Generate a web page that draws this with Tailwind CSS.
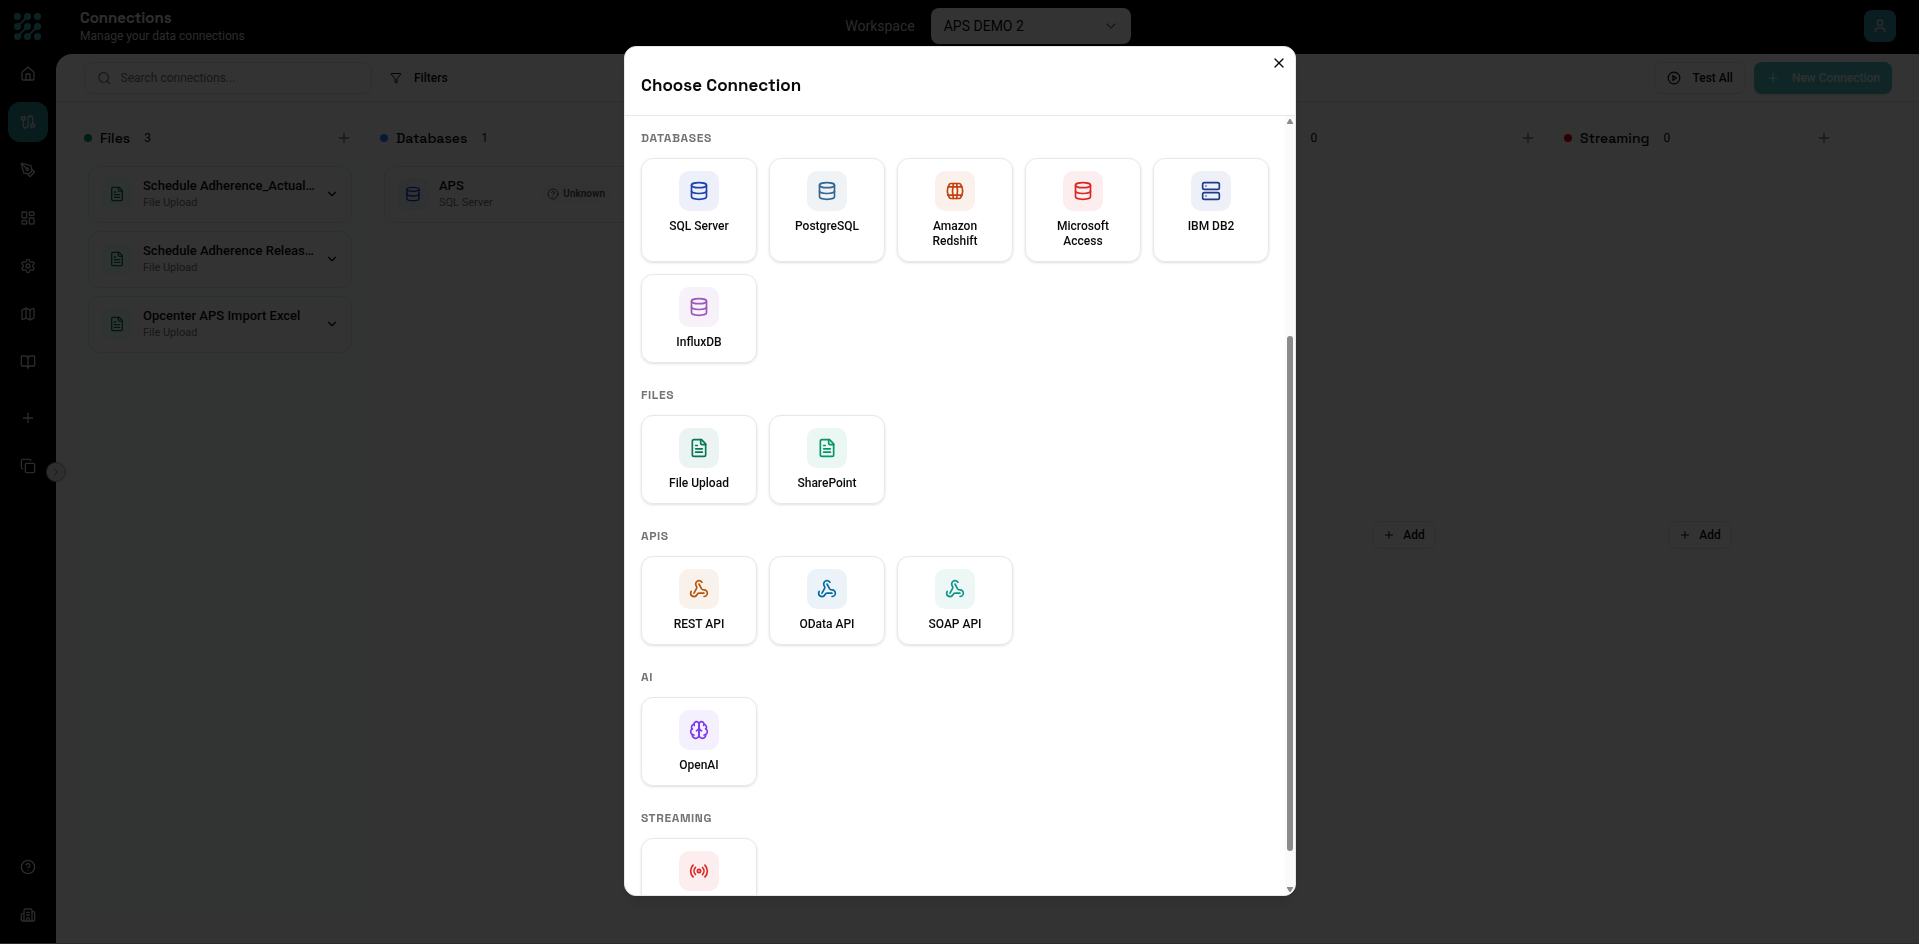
<!DOCTYPE html>
<html lang="en">

<head>
  <meta charset="UTF-8">
  <meta name="viewport" content="width=device-width, initial-scale=1.0">
  <script src="https://cdn.jsdelivr.net/npm/@tailwindcss/browser@4"></script>
  <title>Connections</title>
</head>

<body class="bg-black font-['Roboto',sans-serif] text-neutral-950">

  <!-- icons -->
  <svg class="hidden" fill="none">
    <symbol id="house" viewBox="0 0 24 24"><path d="M15 21v-8a1 1 0 0 0-1-1h-4a1 1 0 0 0-1 1v8"/><path d="M3 10a2 2 0 0 1 .709-1.528l7-5.999a2 2 0 0 1 2.582 0l7 5.999A2 2 0 0 1 21 10v9a2 2 0 0 1-2 2H5a2 2 0 0 1-2-2z"/></symbol>
    <symbol id="cable" viewBox="0 0 24 24"><path d="M17 21v-2a1 1 0 0 1-1-1v-1a2 2 0 0 1 2-2h2a2 2 0 0 1 2 2v1a1 1 0 0 1-1 1"/><path d="M19 15V6.5a1 1 0 0 0-7 0v11a1 1 0 0 1-7 0V9"/><path d="M21 21v-2h-4"/><path d="M3 5h4V3"/><path d="M7 5a1 1 0 0 1 1 1v1a2 2 0 0 1-2 2H4a2 2 0 0 1-2-2V6a1 1 0 0 1 1-1V3"/></symbol>
    <symbol id="pen" viewBox="0 0 24 24"><path d="M15.707 21.293a1 1 0 0 1-1.414 0l-1.586-1.586a1 1 0 0 1 0-1.414l5.586-5.586a1 1 0 0 1 1.414 0l1.586 1.586a1 1 0 0 1 0 1.414z"/><path d="m18 13-1.375-6.874a1 1 0 0 0-.746-.776L3.235 2.028a1 1 0 0 0-1.207 1.207L5.35 15.879a1 1 0 0 0 .776.746L13 18"/><path d="m2.3 2.3 7.286 7.286"/><circle cx="11" cy="11" r="2"/></symbol>
    <symbol id="dashboard" viewBox="0 0 24 24"><rect x="3" y="3" width="7" height="9" rx="1"/><rect x="14" y="3" width="7" height="5" rx="1"/><rect x="14" y="12" width="7" height="9" rx="1"/><rect x="3" y="16" width="7" height="5" rx="1"/></symbol>
    <symbol id="settings" viewBox="0 0 24 24"><path d="M9.671 4.136a2.34 2.34 0 0 1 4.659 0 2.34 2.34 0 0 0 3.319 1.915 2.34 2.34 0 0 1 2.33 4.033 2.34 2.34 0 0 0 0 3.831 2.34 2.34 0 0 1-2.33 4.033 2.34 2.34 0 0 0-3.319 1.915 2.34 2.34 0 0 1-4.659 0 2.34 2.34 0 0 0-3.32-1.915 2.34 2.34 0 0 1-2.33-4.033 2.34 2.34 0 0 0 0-3.831A2.34 2.34 0 0 1 6.35 6.051a2.34 2.34 0 0 0 3.319-1.915"/><circle cx="12" cy="12" r="3"/></symbol>
    <symbol id="map" viewBox="0 0 24 24"><path d="M14.106 5.553a2 2 0 0 0 1.788 0l3.659-1.83A1 1 0 0 1 21 4.619v12.764a1 1 0 0 1-.553.894l-4.553 2.277a2 2 0 0 1-1.788 0l-4.212-2.106a2 2 0 0 0-1.788 0l-3.659 1.83A1 1 0 0 1 3 19.381V6.618a1 1 0 0 1 .553-.894l4.553-2.277a2 2 0 0 1 1.788 0z"/><path d="M15 5.764v15"/><path d="M9 3.236v15"/></symbol>
    <symbol id="book" viewBox="0 0 24 24"><path d="M12 7v14"/><path d="M3 18a1 1 0 0 1-1-1V4a1 1 0 0 1 1-1h5a4 4 0 0 1 4 4 4 4 0 0 1 4-4h5a1 1 0 0 1 1 1v13a1 1 0 0 1-1 1h-6a3 3 0 0 0-3 3 3 3 0 0 0-3-3z"/></symbol>
    <symbol id="plus" viewBox="0 0 24 24"><path d="M5 12h14"/><path d="M12 5v14"/></symbol>
    <symbol id="copy" viewBox="0 0 24 24"><rect x="8" y="8" width="14" height="14" rx="2"/><path d="M4 16c-1.1 0-2-.9-2-2V4c0-1.1.9-2 2-2h10c1.1 0 2 .9 2 2"/></symbol>
    <symbol id="help" viewBox="0 0 24 24"><circle cx="12" cy="12" r="10"/><path d="M9.09 9a3 3 0 0 1 5.83 1c0 2-3 3-3 3"/><path d="M12 17h.01"/></symbol>
    <symbol id="building" viewBox="0 0 24 24"><path d="M10 12h4"/><path d="M10 8h4"/><path d="M14 21v-3a2 2 0 0 0-4 0v3"/><path d="M6 10H4a2 2 0 0 0-2 2v7a2 2 0 0 0 2 2h16a2 2 0 0 0 2-2V9a2 2 0 0 0-2-2h-2"/><path d="M6 21V5a2 2 0 0 1 2-2h8a2 2 0 0 1 2 2v16"/></symbol>
    <symbol id="chevron-right" viewBox="0 0 24 24"><path d="m9 18 6-6-6-6"/></symbol>
    <symbol id="chevron-down" viewBox="0 0 24 24"><path d="m6 9 6 6 6-6"/></symbol>
    <symbol id="user" viewBox="0 0 24 24"><path d="M19 21v-2a4 4 0 0 0-4-4H9a4 4 0 0 0-4 4v2"/><circle cx="12" cy="7" r="4"/></symbol>
    <symbol id="search" viewBox="0 0 24 24"><path d="m21 21-4.34-4.34"/><circle cx="11" cy="11" r="8"/></symbol>
    <symbol id="funnel" viewBox="0 0 24 24"><path d="M10 20a1 1 0 0 0 .553.895l2 1A1 1 0 0 0 14 21v-7a2 2 0 0 1 .517-1.341L21.74 4.67A1 1 0 0 0 21 3H3a1 1 0 0 0-.742 1.67l7.225 7.989A2 2 0 0 1 10 14z"/></symbol>
    <symbol id="play" viewBox="0 0 24 24"><circle cx="12" cy="12" r="10"/><path d="m10 8 6 4-6 4z"/></symbol>
    <symbol id="file" viewBox="0 0 24 24"><path d="M15 2H6a2 2 0 0 0-2 2v16a2 2 0 0 0 2 2h12a2 2 0 0 0 2-2V7Z"/><path d="M14 2v4a2 2 0 0 0 2 2h4"/><path d="M10 9H8"/><path d="M16 13H8"/><path d="M16 17H8"/></symbol>
    <symbol id="database" viewBox="0 0 24 24"><ellipse cx="12" cy="5" rx="9" ry="3"/><path d="M3 5v14a9 3 0 0 0 18 0V5"/><path d="M3 12a9 3 0 0 0 18 0"/></symbol>
    <symbol id="barrel" viewBox="0 0 24 24"><path d="M10 3a41 41 0 0 0 0 18"/><path d="M14 3a41 41 0 0 1 0 18"/><path d="M17 3a2 2 0 0 1 1.68.92 15.25 15.25 0 0 1 0 16.16A2 2 0 0 1 17 21H7a2 2 0 0 1-1.68-.92 15.25 15.25 0 0 1 0-16.16A2 2 0 0 1 7 3z"/><path d="M3.84 17h16.32"/><path d="M3.84 7h16.32"/></symbol>
    <symbol id="server" viewBox="0 0 24 24"><rect x="2" y="2" width="20" height="8" rx="2"/><rect x="2" y="14" width="20" height="8" rx="2"/><path d="M6 6h.01"/><path d="M6 18h.01"/></symbol>
    <symbol id="webhook" viewBox="0 0 24 24"><path d="M18 16.98h-5.99c-1.1 0-1.95.94-2.48 1.9A4 4 0 0 1 2 17c.01-.7.2-1.4.57-2"/><path d="m6 17 3.13-5.78c.53-.97.1-2.18-.5-3.1a4 4 0 1 1 6.89-4.06"/><path d="m12 6 3.13 5.73C15.66 12.7 16.9 13 18 13a4 4 0 0 1 0 8"/></symbol>
    <symbol id="brain" viewBox="0 0 24 24"><path d="M12 5a3 3 0 1 0-5.997.125 4 4 0 0 0-2.526 5.77 4 4 0 0 0 .556 6.588A4 4 0 1 0 12 18Z"/><path d="M12 5a3 3 0 1 1 5.997.125 4 4 0 0 1 2.526 5.77 4 4 0 0 1-.556 6.588A4 4 0 1 1 12 18Z"/><path d="M15 13a4.5 4.5 0 0 1-3-4 4.5 4.5 0 0 1-3 4"/><path d="M17.599 6.5a3 3 0 0 0 .399-1.375"/><path d="M6.003 5.125A3 3 0 0 0 6.401 6.5"/><path d="M3.477 10.896a4 4 0 0 1 .585-.396"/><path d="M19.938 10.5a4 4 0 0 1 .585.396"/><path d="M6 18a4 4 0 0 1-1.967-.516"/><path d="M19.967 17.484A4 4 0 0 1 18 18"/></symbol>
    <symbol id="radio" viewBox="0 0 24 24"><path d="M4.9 19.1C1 15.2 1 8.8 4.9 4.9"/><path d="M7.8 16.2c-2.3-2.3-2.3-6.1 0-8.5"/><circle cx="12" cy="12" r="2"/><path d="M16.2 7.8c2.3 2.3 2.3 6.1 0 8.5"/><path d="M19.1 4.9C23 8.8 23 15.1 19.1 19"/></symbol>
    <symbol id="close" viewBox="0 0 24 24"><path d="M18 6 6 18"/><path d="m6 6 12 12"/></symbol>
  </svg>

  <div class="flex h-screen border-b border-neutral-300 fill-none stroke-current stroke-2 [stroke-linecap:round] [stroke-linejoin:round]">

    <!-- sidebar -->
    <nav class="relative z-10 flex w-14 shrink-0 flex-col items-center bg-black pb-2 text-neutral-300">
      <a href="#" aria-label="Home page" class="flex h-[54px] items-center">
        <svg class="size-7 text-[#3fa3ab]" viewBox="0 0 28 28">
          <g class="fill-current stroke-none"><circle cx="3.5" cy="3.5" r="3.6"/><circle cx="13.5" cy="3.5" r="3.6"/><circle cx="23.5" cy="3.5" r="3.6"/><circle cx="3.5" cy="13.5" r="3.6"/><circle cx="13.5" cy="13.5" r="3.6"/><circle cx="23.5" cy="13.5" r="3.6"/><circle cx="3.5" cy="23.5" r="3.6"/><circle cx="13.5" cy="23.5" r="3.6"/><circle cx="23.5" cy="23.5" r="3.6"/></g>
          <path d="M4 13 13 4M4 23 13 14M14 23 23 14"/>
        </svg>
      </a>
      <div class="flex flex-col gap-2">
        <a href="#" aria-label="Home" class="flex size-10 items-center justify-center rounded-xl"><svg class="size-4"><use href="#house"/></svg></a>
        <a href="#" aria-label="Connections" class="flex size-10 items-center justify-center rounded-xl bg-[#288791]"><svg class="size-4"><use href="#cable"/></svg></a>
        <a href="#" aria-label="Design" class="flex size-10 items-center justify-center rounded-xl"><svg class="size-4"><use href="#pen"/></svg></a>
        <a href="#" aria-label="Dashboards" class="flex size-10 items-center justify-center rounded-xl"><svg class="size-4"><use href="#dashboard"/></svg></a>
        <a href="#" aria-label="Settings" class="flex size-10 items-center justify-center rounded-xl"><svg class="size-4"><use href="#settings"/></svg></a>
        <a href="#" aria-label="Map" class="flex size-10 items-center justify-center rounded-xl"><svg class="size-4"><use href="#map"/></svg></a>
        <a href="#" aria-label="Docs" class="flex size-10 items-center justify-center rounded-xl"><svg class="size-4"><use href="#book"/></svg></a>
      </div>
      <div class="mt-4 flex flex-col gap-2">
        <button aria-label="Add" class="flex size-10 items-center justify-center"><svg class="size-4"><use href="#plus"/></svg></button>
        <button aria-label="Copy" class="flex size-10 items-center justify-center"><svg class="size-4"><use href="#copy"/></svg></button>
      </div>
      <div class="mt-auto flex flex-col gap-2">
        <a href="#" aria-label="Help" class="flex size-10 items-center justify-center"><svg class="size-4"><use href="#help"/></svg></a>
        <a href="#" aria-label="Company" class="flex size-10 items-center justify-center"><svg class="size-4"><use href="#building"/></svg></a>
      </div>
      <button aria-label="Expand sidebar" class="absolute top-1/2 -right-2.5 flex size-5 -translate-y-1/2 items-center justify-center rounded-full border border-neutral-400 bg-neutral-200 text-neutral-500"><svg class="size-3"><use href="#chevron-right"/></svg></button>
    </nav>

    <div class="flex min-w-0 flex-1 flex-col">

      <!-- top bar -->
      <header class="grid h-[54px] shrink-0 grid-cols-3 items-center pr-[23px] pb-0.5 pl-6 text-neutral-200">
        <div>
          <h1 class="font-['Space_Grotesk','Inter',sans-serif] text-[15px] leading-5 font-bold">Connections</h1>
          <p class="text-xs leading-4 text-neutral-300">Manage your data connections</p>
        </div>
        <div class="flex items-center justify-center gap-4">
          <label for="workspace" class="text-sm text-neutral-300">Workspace</label>
          <div class="relative w-[200px]">
            <select id="workspace" class="h-9 w-full appearance-none rounded-lg bg-white px-[13px] text-sm text-neutral-950">
              <option>APS DEMO 2</option>
            </select>
            <svg class="pointer-events-none absolute top-2.5 right-3 size-4 text-neutral-500"><use href="#chevron-down"/></svg>
          </div>
        </div>
        <button aria-label="Account" class="flex size-8 items-center justify-center justify-self-end rounded-lg bg-[#3293a0] text-neutral-300"><svg class="size-4"><use href="#user"/></svg></button>
      </header>

      <main class="flex flex-1 flex-col rounded-tl-2xl bg-white">

        <div class="flex items-center border-b border-neutral-200 pt-2 pr-[27px] pb-[7px] pl-7">
          <label class="flex h-8 w-72 items-center gap-[9px] rounded-lg border border-neutral-200 px-3 text-neutral-500">
            <svg class="size-4"><use href="#search"/></svg>
            <input type="text" aria-label="Search connections" placeholder="Search connections..." class="w-full text-xs placeholder:text-neutral-500">
          </label>
          <button class="ml-[18px] flex items-center gap-3 text-xs font-medium"><svg class="size-3"><use href="#funnel"/></svg>Filters</button>
          <button class="ml-auto flex h-8 items-center gap-3 rounded-lg border border-neutral-200 px-3 text-xs font-medium"><svg class="size-[14px]"><use href="#play"/></svg>Test All</button>
          <button class="ml-2 flex h-8 items-center gap-3 rounded-lg bg-[#50b9be] px-3 text-xs font-medium text-white/80 shadow-sm"><svg class="size-[14px]"><use href="#plus"/></svg>New Connection</button>
        </div>

        <!-- board -->
        <div class="flex flex-1 gap-2 px-5 pt-5 pb-7">
          <section class="flex w-72 shrink-0 flex-col">
            <div class="flex h-8 items-center gap-2 px-2">
              <span class="size-2 rounded-full bg-emerald-600"></span>
              <h2 class="font-['Space_Grotesk','Inter',sans-serif] text-sm font-medium">Files</h2>
              <span class="pl-1.5 text-xs">3</span>
              <button aria-label="Add file" class="ml-auto flex size-6 items-center justify-center text-neutral-500"><svg class="size-4"><use href="#plus"/></svg></button>
            </div>
            <div class="flex flex-1 flex-col gap-2 bg-emerald-50/30 px-3 pt-3">
              <article class="flex h-[57px] items-center gap-2.5 rounded-xl border border-neutral-200 bg-white px-3 pb-0.5">
                <span class="flex size-8 shrink-0 items-center justify-center rounded-lg bg-emerald-50 text-emerald-700"><svg class="size-4"><use href="#file"/></svg></span>
                <div class="min-w-0 flex-1">
                  <h3 class="text-[13px] leading-[18px] font-medium whitespace-nowrap">Schedule Adherence_Actual…</h3>
                  <p class="text-[11px] leading-4 text-neutral-500">File Upload</p>
                </div>
                <button aria-label="Expand"><svg class="size-3.5"><use href="#chevron-down"/></svg></button>
              </article>
              <article class="flex h-[57px] items-center gap-2.5 rounded-xl border border-neutral-200 bg-white px-3 pb-0.5">
                <span class="flex size-8 shrink-0 items-center justify-center rounded-lg bg-emerald-50 text-emerald-700"><svg class="size-4"><use href="#file"/></svg></span>
                <div class="min-w-0 flex-1">
                  <h3 class="text-[13px] leading-[18px] font-medium whitespace-nowrap">Schedule Adherence Releas…</h3>
                  <p class="text-[11px] leading-4 text-neutral-500">File Upload</p>
                </div>
                <button aria-label="Expand"><svg class="size-3.5"><use href="#chevron-down"/></svg></button>
              </article>
              <article class="flex h-[57px] items-center gap-2.5 rounded-xl border border-neutral-200 bg-white px-3 pb-0.5">
                <span class="flex size-8 shrink-0 items-center justify-center rounded-lg bg-emerald-50 text-emerald-700"><svg class="size-4"><use href="#file"/></svg></span>
                <div class="min-w-0 flex-1">
                  <h3 class="text-[13px] leading-[18px] font-medium whitespace-nowrap">Opcenter APS Import Excel</h3>
                  <p class="text-[11px] leading-4 text-neutral-500">File Upload</p>
                </div>
                <button aria-label="Expand"><svg class="size-3.5"><use href="#chevron-down"/></svg></button>
              </article>
            </div>
          </section>

          <section class="flex w-72 shrink-0 flex-col">
            <div class="flex h-8 items-center gap-2 px-2">
              <span class="size-2 rounded-full bg-blue-500"></span>
              <h2 class="font-['Space_Grotesk','Inter',sans-serif] text-sm font-medium">Databases</h2>
              <span class="pl-1.5 text-xs">1</span>
            </div>
            <div class="flex flex-1 flex-col gap-2 px-3 pt-3">
              <article class="flex h-[57px] items-center gap-2.5 rounded-xl border border-neutral-200 bg-white px-3 pb-0.5">
                <span class="flex size-8 shrink-0 items-center justify-center rounded-lg bg-blue-50 text-blue-800"><svg class="size-4"><use href="#database"/></svg></span>
                <div class="min-w-0 flex-1">
                  <h3 class="text-[13px] leading-[18px] font-medium whitespace-nowrap">APS</h3>
                  <p class="text-[11px] leading-4 text-neutral-500">SQL Server</p>
                </div>
                <span class="mr-6 flex items-center gap-1 rounded-full bg-neutral-50 px-1.5 py-0.5 text-[10px] font-semibold text-neutral-600"><svg class="size-3"><use href="#help"/></svg>Unknown</span>
              </article>
            </div>
          </section>

          <section class="w-72 shrink-0"></section>
          <section class="w-72 shrink-0"></section>

          <section class="flex w-72 shrink-0 flex-col">
            <div class="flex h-8 items-center gap-2 px-2">
              <span class="size-2 rounded-full bg-violet-600"></span>
              <h2 class="font-['Space_Grotesk','Inter',sans-serif] text-sm font-medium">AI</h2>
              <span class="pl-1.5 text-xs">0</span>
              <button aria-label="Add AI" class="ml-auto flex size-6 items-center justify-center text-neutral-500"><svg class="size-4"><use href="#plus"/></svg></button>
            </div>
            <div class="flex flex-1 items-center justify-center">
              <button class="flex h-7 items-center gap-2 rounded-lg border border-neutral-200 px-2.5 text-xs font-medium"><svg class="size-3"><use href="#plus"/></svg>Add</button>
            </div>
          </section>

          <section class="flex w-72 shrink-0 flex-col">
            <div class="flex h-8 items-center gap-2 px-2">
              <span class="size-2 rounded-full bg-red-600"></span>
              <h2 class="font-['Space_Grotesk','Inter',sans-serif] text-sm font-medium">Streaming</h2>
              <span class="pl-1.5 text-xs">0</span>
              <button aria-label="Add streaming" class="ml-auto flex size-6 items-center justify-center text-neutral-500"><svg class="size-4"><use href="#plus"/></svg></button>
            </div>
            <div class="flex flex-1 items-center justify-center">
              <button class="flex h-7 items-center gap-2 rounded-lg border border-neutral-200 px-2.5 text-xs font-medium"><svg class="size-3"><use href="#plus"/></svg>Add</button>
            </div>
          </section>
        </div>
      </main>
    </div>
  </div>

  <!-- dialog -->
  <div class="fixed inset-0 z-50 flex items-center justify-center bg-black/80 pb-0.5 pl-px fill-none stroke-current stroke-2 [stroke-linecap:round] [stroke-linejoin:round]">
    <div role="dialog" aria-labelledby="dialog-title" class="relative flex h-[90vh] w-full max-w-2xl flex-col overflow-hidden rounded-xl border border-gray-200 bg-white shadow-lg">
      <div class="flex h-[69px] shrink-0 items-center border-b border-gray-200 px-4 pt-2">
        <h2 id="dialog-title" class="font-['Space_Grotesk','Inter',sans-serif] text-[17px] leading-6 font-semibold">Choose Connection</h2>
        <button aria-label="Close" class="absolute top-2 right-2 p-0"><svg class="size-4"><use href="#close"/></svg></button>
      </div>

      <div class="flex min-h-0 flex-1">
        <div class="flex flex-1 flex-col gap-6 overflow-hidden px-4 pt-[14px]">
          <section>
            <h3 class="mb-3 font-['Space_Grotesk','Inter',sans-serif] text-xs leading-4 font-semibold tracking-wider text-neutral-500">DATABASES</h3>
            <div class="grid grid-cols-5 gap-3">
              <button class="flex flex-col items-center gap-2 rounded-xl border border-gray-200 p-3 shadow-sm">
                <span class="flex size-10 items-center justify-center rounded-[10px] bg-[#1e40af]/8 text-[#1e40af]"><svg class="size-5"><use href="#database"/></svg></span>
                <span class="text-xs leading-[15px] font-medium">SQL Server</span>
              </button>
              <button class="flex flex-col items-center gap-2 rounded-xl border border-gray-200 p-3 shadow-sm">
                <span class="flex size-10 items-center justify-center rounded-[10px] bg-[#336791]/8 text-[#336791]"><svg class="size-5"><use href="#database"/></svg></span>
                <span class="text-xs leading-[15px] font-medium">PostgreSQL</span>
              </button>
              <button class="flex flex-col items-center gap-2 rounded-xl border border-gray-200 p-3 shadow-sm">
                <span class="flex size-10 items-center justify-center rounded-[10px] bg-[#c2410c]/8 text-[#c2410c]"><svg class="size-5"><use href="#barrel"/></svg></span>
                <span class="text-xs leading-[15px] font-medium">Amazon<br>Redshift</span>
              </button>
              <button class="flex flex-col items-center gap-2 rounded-xl border border-gray-200 p-3 shadow-sm">
                <span class="flex size-10 items-center justify-center rounded-[10px] bg-[#dc2626]/8 text-[#dc2626]"><svg class="size-5"><use href="#database"/></svg></span>
                <span class="text-xs leading-[15px] font-medium">Microsoft<br>Access</span>
              </button>
              <button class="flex flex-col items-center gap-2 rounded-xl border border-gray-200 p-3 shadow-sm">
                <span class="flex size-10 items-center justify-center rounded-[10px] bg-[#1e3a8a]/8 text-[#1e3a8a]"><svg class="size-5"><use href="#server"/></svg></span>
                <span class="text-xs leading-[15px] font-medium">IBM DB2</span>
              </button>
              <button class="flex flex-col items-center gap-2 rounded-xl border border-gray-200 p-3 shadow-sm">
                <span class="flex size-10 items-center justify-center rounded-[10px] bg-[#9b59b6]/8 text-[#9b59b6]"><svg class="size-5"><use href="#database"/></svg></span>
                <span class="text-xs leading-[15px] font-medium">InfluxDB</span>
              </button>
            </div>
          </section>

          <section>
            <h3 class="mb-3 font-['Space_Grotesk','Inter',sans-serif] text-xs leading-4 font-semibold tracking-wider text-neutral-500">FILES</h3>
            <div class="grid grid-cols-5 gap-3">
              <button class="flex flex-col items-center gap-2 rounded-xl border border-gray-200 p-3 shadow-sm">
                <span class="flex size-10 items-center justify-center rounded-[10px] bg-[#047857]/8 text-[#047857]"><svg class="size-5"><use href="#file"/></svg></span>
                <span class="text-xs leading-[15px] font-medium">File Upload</span>
              </button>
              <button class="flex flex-col items-center gap-2 rounded-xl border border-gray-200 p-3 shadow-sm">
                <span class="flex size-10 items-center justify-center rounded-[10px] bg-[#059669]/8 text-[#059669]"><svg class="size-5"><use href="#file"/></svg></span>
                <span class="text-xs leading-[15px] font-medium">SharePoint</span>
              </button>
            </div>
          </section>

          <section>
            <h3 class="mb-3 font-['Space_Grotesk','Inter',sans-serif] text-xs leading-4 font-semibold tracking-wider text-neutral-500">APIS</h3>
            <div class="grid grid-cols-5 gap-3">
              <button class="flex flex-col items-center gap-2 rounded-xl border border-gray-200 p-3 shadow-sm">
                <span class="flex size-10 items-center justify-center rounded-[10px] bg-[#b45309]/8 text-[#b45309]"><svg class="size-5"><use href="#webhook"/></svg></span>
                <span class="text-xs leading-[15px] font-medium">REST API</span>
              </button>
              <button class="flex flex-col items-center gap-2 rounded-xl border border-gray-200 p-3 shadow-sm">
                <span class="flex size-10 items-center justify-center rounded-[10px] bg-[#0369a1]/8 text-[#0369a1]"><svg class="size-5"><use href="#webhook"/></svg></span>
                <span class="text-xs leading-[15px] font-medium">OData API</span>
              </button>
              <button class="flex flex-col items-center gap-2 rounded-xl border border-gray-200 p-3 shadow-sm">
                <span class="flex size-10 items-center justify-center rounded-[10px] bg-[#0d9488]/8 text-[#0d9488]"><svg class="size-5"><use href="#webhook"/></svg></span>
                <span class="text-xs leading-[15px] font-medium">SOAP API</span>
              </button>
            </div>
          </section>

          <section>
            <h3 class="mb-3 font-['Space_Grotesk','Inter',sans-serif] text-xs leading-4 font-semibold tracking-wider text-neutral-500">AI</h3>
            <div class="grid grid-cols-5 gap-3">
              <button class="flex flex-col items-center gap-2 rounded-xl border border-gray-200 p-3 shadow-sm">
                <span class="flex size-10 items-center justify-center rounded-[10px] bg-[#7c3aed]/8 text-[#7c3aed]"><svg class="size-5"><use href="#brain"/></svg></span>
                <span class="text-xs leading-[15px] font-medium">OpenAI</span>
              </button>
            </div>
          </section>

          <section>
            <h3 class="mb-3 font-['Space_Grotesk','Inter',sans-serif] text-xs leading-4 font-semibold tracking-wider text-neutral-500">STREAMING</h3>
            <div class="grid grid-cols-5 gap-3">
              <button aria-label="Streaming" class="flex flex-col items-center gap-2 rounded-xl border border-gray-200 p-3 pb-9 shadow-sm">
                <span class="flex size-10 items-center justify-center rounded-[10px] bg-[#dc2626]/8 text-[#dc2626]"><svg class="size-5"><use href="#radio"/></svg></span>
              </button>
            </div>
          </section>
        </div>

        <!-- scrollbar -->
        <div class="flex w-[10px] flex-col items-center bg-neutral-50 py-[3px] text-[#8b8b8b]">
          <svg class="h-[5px] w-1.5 fill-current stroke-none" viewBox="0 0 6 5"><path d="M2.4 0h1.2L6 4v1H0V4z"/></svg>
          <div class="flex w-1.5 flex-1 flex-col">
            <div class="grow-[212]"></div>
            <div class="grow-[515] rounded-full bg-[#8b8b8b]"></div>
            <div class="grow-[36]"></div>
          </div>
          <svg class="h-[5px] w-1.5 fill-current stroke-none" viewBox="0 0 6 5"><path d="M2.4 5h1.2L6 1V0H0v1z"/></svg>
        </div>
      </div>
    </div>
  </div>

</body>

</html>
